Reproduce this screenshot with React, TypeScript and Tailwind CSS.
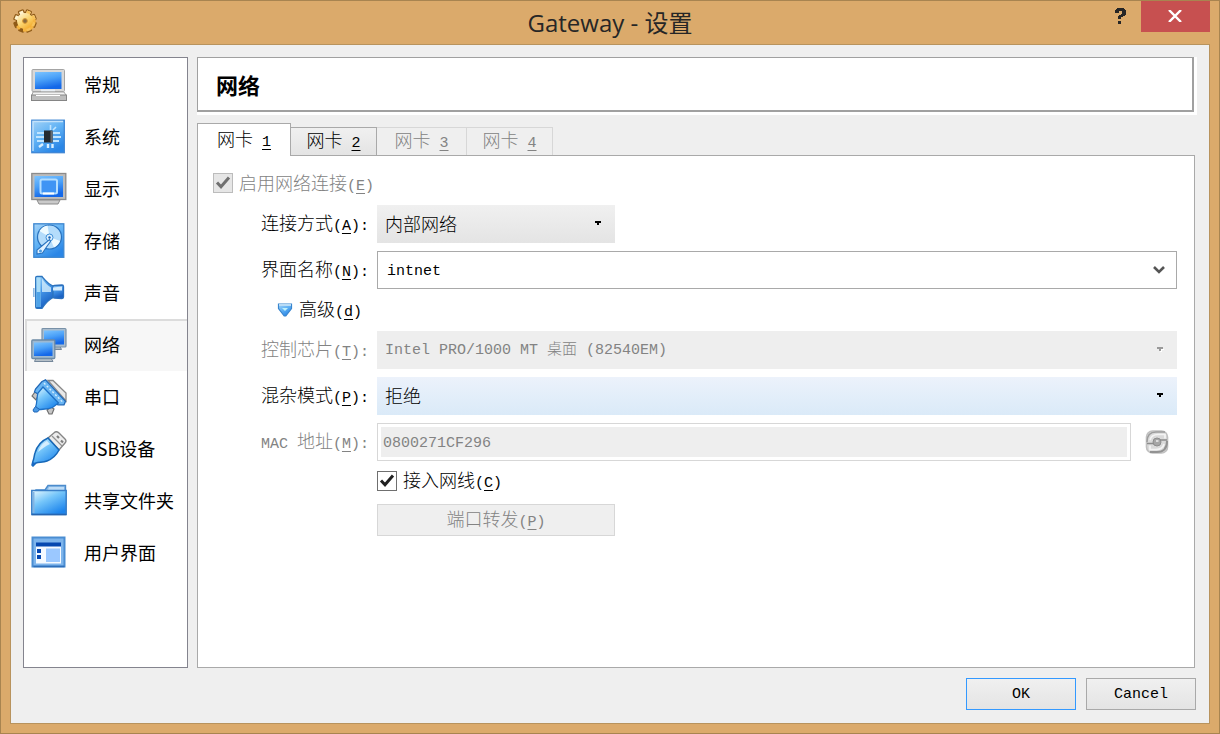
import { useState, type ReactNode, type SelectHTMLAttributes } from "react";

const song = "font-['Liberation_Mono','Noto_Sans_CJK_SC',monospace]";

function Gradients() {
  return (
    <svg width="0" height="0" className="absolute" aria-hidden="true">
      <defs>
        <linearGradient id="screen" x1="0" y1="0" x2="0.3" y2="1">
          <stop offset="0" stopColor="#7cc4ff" />
          <stop offset="0.5" stopColor="#4aa0f8" />
          <stop offset="1" stopColor="#1468e8" />
        </linearGradient>
        <linearGradient id="plate" x1="0" y1="0" x2="0.6" y2="1">
          <stop offset="0" stopColor="#a5d3f7" />
          <stop offset="0.5" stopColor="#62b3f5" />
          <stop offset="1" stopColor="#2a86e6" />
        </linearGradient>
        <linearGradient id="glass" x1="0" y1="0" x2="0.7" y2="1">
          <stop offset="0" stopColor="#eafaff" />
          <stop offset="0.45" stopColor="#76c6fa" />
          <stop offset="1" stopColor="#1c84ec" />
        </linearGradient>
        <linearGradient id="cone" x1="0" y1="0" x2="0.4" y2="1">
          <stop offset="0" stopColor="#9ed4fa" />
          <stop offset="0.5" stopColor="#4596e8" />
          <stop offset="1" stopColor="#1a62c4" />
        </linearGradient>
        <linearGradient id="gold" x1="4" y1="2" x2="19" y2="22" gradientUnits="userSpaceOnUse">
          <stop offset="0" stopColor="#fffdf2" />
          <stop offset="0.5" stopColor="#fbd672" />
          <stop offset="1" stopColor="#f09a10" />
        </linearGradient>
      </defs>
    </svg>
  );
}

function Icon({ children }: { children: ReactNode }) {
  return (
    <svg viewBox="0 0 36 36" className="size-9 shrink-0" aria-hidden="true">
      {children}
    </svg>
  );
}

const icons: Record<string, ReactNode> = {
  常规: (
    <Icon>
      <rect x="1" y="2.5" width="32.500" height="22" rx="1" fill="#d8d8d8" stroke="#a4a4a4" />
      <rect x="4" y="5" width="26.500" height="17" fill="url(#screen)" />
      <path d="M10 22.5h14v2H10z" fill="#e8eef5" />
      <path d="M2 25h31l2.200 3.500H.8z" fill="#f2f2f2" stroke="#a4a4a4" />
      <rect x=".5" y="28" width="35" height="5.500" fill="#bdbdbd" stroke="#858585" />
      <path d="M5 28.5h24" stroke="#fff" />
    </Icon>
  ),
  系统: (
    <Icon>
      <rect x=".8" y="1.2" width="32.5" height="32.5" fill="url(#plate)" stroke="#3f86d4" strokeWidth="1.3" />
      <path d="M2 32V2.5h30" fill="none" stroke="#c3e2fb" strokeWidth="1.4" />
      <path d="M6 14h7M5 18h8M6 22h7M22 14h7M22 18h8M22 22h6" stroke="#bfe4ff" strokeWidth="1.8" />
      <path d="M19.5 6v5M25 8l-3 3" stroke="#bfe4ff" strokeWidth="1.6" />
      <path d="M17 25v4M21.500 25v4M8 28l4-3" stroke="#d8efff" strokeWidth="2.4" />
      <rect x="13" y="11.5" width="8.500" height="12" fill="#252a30" />
      <path d="M20.500 12v11.500" stroke="#666c73" strokeWidth="2" />
    </Icon>
  ),
  显示: (
    <Icon>
      <rect x=".8" y="2.5" width="34" height="26" fill="#bcbcbc" stroke="#8b8b8b" strokeWidth="1.3" />
      <rect x="3.5" y="5" width="28.5" height="21" fill="url(#screen)" />
      <rect x="9.500" y="8.5" width="16.5" height="14" rx="1.5" fill="#3f94f4" stroke="#b4deff" strokeWidth="2" />
      <path d="M12 22.500h11" stroke="#fff" strokeWidth="2" />
      <path d="M6 29h23l-2 4H8z" fill="#cacaca" stroke="#8b8b8b" />
    </Icon>
  ),
  存储: (
    <Icon>
      <rect x="2.8" y=".8" width="30" height="33.5" fill="url(#plate)" stroke="#3c86cf" strokeWidth="1.3" />
      <circle cx="18.5" cy="14" r="12" fill="#b4dcfb" stroke="#2972be" strokeWidth="1.2" />
      <path d="M18.500 14L8.500 8a12 12 0 0 1 8-5.500zM18.500 14l10.500 4a12 12 0 0 1-6 6.500z" fill="#eefaff" />
      <circle cx="18.500" cy="14.500" r="3.500" fill="#dff1ff" stroke="#3f8fd8" />
      <circle cx="18.500" cy="14.500" r="1.200" fill="#1662b4" />
      <path d="M6 31v-4l6-5 6.500-5.500 1 2-4 5.500-4 6z" fill="#e3f2ff" stroke="#2972be" strokeWidth="1.100" />
      <circle cx="9.500" cy="28" r="1.500" fill="#4d9be0" />
    </Icon>
  ),
  声音: (
    <Icon>
      <path d="M20 11.500l3.500-1L31 10q1.500 0 1.500 1.500V22q0 1.500-1.500 1.500l-7.500-.5-3.500-1z" fill="url(#cone)" stroke="#2b6fbd" strokeWidth="1.300" />
      <path d="M4.700 2.500q0-1 1.300-1h5C14 5 17 9 22 11v11.500C17 25 14 29 11 33.300H6q-1.300 0-1.300-1.300z" fill="url(#cone)" stroke="#2b74be" strokeWidth="1.300" />
      <path d="M5.500 2.500h4v29.500H5.500z" fill="#a9dcf8" />
      <path d="M5.500 17h4v15h-4z" fill="#4fa3e8" />
      <path d="M11 3.500c2.500 4 5.500 7 9 9V17h-9z" fill="#d3edfd" opacity=".8" />
      <path d="M22 12.500l9-1v4h-9z" fill="#d3ebfd" />
      <path d="M2.800 13v9" stroke="#8fbbe4" strokeWidth="1.600" />
    </Icon>
  ),
  网络: (
    <Icon>
      <path d="M17 19.500h12l1.500 3H15z" fill="#a8b4be" stroke="#74879a" />
      <rect x="11" y="1.500" width="24" height="18.500" rx="1" fill="#a9bccd" stroke="#7891a8" strokeWidth="1.200" />
      <rect x="13" y="3.500" width="20" height="14" fill="url(#screen)" />
      <path d="M5 31h15l2 3.500H3.500z" fill="#b6c0c8" stroke="#74879a" />
      <rect x=".8" y="13" width="23" height="18.500" rx="1" fill="#9db8d0" stroke="#6e8ba5" strokeWidth="1.300" />
      <rect x="3" y="15.500" width="18.500" height="13.500" fill="url(#screen)" />
    </Icon>
  ),
  串口: (
    <Icon>
      <path d="M17 1.500h5L35 14v8z" fill="#e8e8e8" stroke="#8a8a8a" strokeWidth="1.300" />
      <path d="M1 17l3-4 4 2-3 6zM16 31l4-3 3 2-2 5h-3z" fill="#c6c6c6" stroke="#6f6f6f" strokeWidth="1.200" />
      <path d="M11 2.500l3.500-1.700 20 21.500-1.500 3.500h-6L3.500 13l1-3z" fill="#69b5f3" stroke="#2169b8" strokeWidth="1.300" />
      <path d="M13 4l19.500 20" stroke="#d5edfd" strokeWidth="1.400" strokeDasharray="2 2" />
      <path d="M12 8L7 14c-1.500 4-.5 9-2.500 14.500l3.500 2c5-.500 9 0 13.500-2l6-4.500z" fill="url(#glass)" stroke="#1d70c6" strokeWidth="1.300" />
      <path d="M4.500 27.500l4 3-2 2.500H3L2 31z" fill="#4a9ae6" stroke="#1e66b8" />
    </Icon>
  ),
  USB设备: (
    <Icon>
      <path d="M17 7l7-6q2-1 4 1l6 6q2 2 0 4l-6 7z" fill="#ededed" stroke="#858585" strokeWidth="1.400" />
      <path d="M21 5l10 10" stroke="#939393" strokeWidth="1.200" />
      <path d="M26 5l2 2M30 9.500l2 2" stroke="#7d7d7d" strokeWidth="2.200" />
      <path d="M17 7l11 12c-3 6-7 9-12 11-4 1.500-8 1-11 2l-3 3-1-1 1-4c1-2 1-5 2-8C6 15 10 10 17 7z" fill="url(#glass)" stroke="#1768b8" strokeWidth="1.500" />
      <path d="M7 21c2-6 5-9 9-11l3 3c-5 2-8 5-12 8z" fill="#fff" opacity=".65" />
      <path d="M1 31l4 1-3 3H1z" fill="#1869c4" />
    </Icon>
  ),
  共享文件夹: (
    <Icon>
      <path d="M14 7l3-4.500h17.500v27H5V7z" fill="#8cbce9" stroke="#4b8bcc" strokeWidth="1.400" />
      <path d="M18 4h15v3H17z" fill="#bddcf7" />
      <path d="M.8 7.500h34.400v24H.8z" fill="url(#glass)" stroke="#3a7fc8" strokeWidth="1.500" />
      <path d="M2.500 30V9" stroke="#83b4e3" strokeWidth="2" />
      <path d="M.8 31.500h34.400" stroke="#2765b0" strokeWidth="1.500" />
    </Icon>
  ),
  用户界面: (
    <Icon>
      <rect x="1.500" y="2.500" width="32" height="29" fill="#7eb5ec" stroke="#4a8dd2" strokeWidth="2" />
      <rect x="5" y="8" width="25" height="20.500" fill="#f5faff" />
      <rect x="5" y="7.500" width="25" height="4" fill="#0648b0" />
      <rect x="6" y="14" width="4" height="4" fill="#0648b0" />
      <rect x="6" y="20" width="4" height="4" fill="#0648b0" />
      <rect x="15" y="13.500" width="14" height="13.500" fill="#9bc8ff" />
      <path d="M2.500 31.500h31" stroke="#2e6fbb" strokeWidth="1.500" />
    </Icon>
  ),
};

function Gear() {
  return (
    <svg viewBox="0 0 24 24" className="size-6" aria-hidden="true">
      <g fill="#8f5a17">
        {[22, 67, 112, 157].map((a) => (
          <rect key={a} x="8.800" y=".2" width="6.400" height="23.600" rx="1.500" transform={`rotate(${a} 12 12)`} />
        ))}
        <circle cx="12" cy="12" r="8.800" />
      </g>
      {[22, 67, 112, 157].map((a) => (
        <path
          key={a}
          d="M10 1.400h4v4h-4z"
          fill="#fff3cc"
          transform={`rotate(${a - 90} 12 12)`}
        />
      ))}
      {[112, 157, 202, 247].map((a) => (
        <path key={a} d="M10 1.400h4v4h-4z" fill="#f5b440" transform={`rotate(${a - 22} 12 12)`} />
      ))}
      {[22, 67, 112, 157].map((a) => (
        <path key={a} d="M10 1.400h4v4h-4z" fill="#f8c25a" transform={`rotate(${a} 12 12)`} />
      ))}
      <circle cx="12" cy="12" r="8" fill="url(#gold)" />
      <circle cx="12" cy="12" r="2.400" fill="#8a6a3c" stroke="#d99a35" />
    </svg>
  );
}

function Key({ children }: { children: ReactNode }) {
  return <u className="underline decoration-1 underline-offset-[3px]">{children}</u>;
}

function Caption({ text, hotkey, colon }: { text: ReactNode; hotkey: string; colon?: boolean }) {
  return (
    <>
      <span className="text-lg leading-6">{text}</span>
      <span>
        (<Key>{hotkey}</Key>){colon ? ":" : ""}
      </span>
    </>
  );
}

function FieldLabel({ htmlFor, text, hotkey, dim }: { htmlFor: string; text: ReactNode; hotkey: string; dim?: boolean }) {
  return (
    <label htmlFor={htmlFor} className={`justify-self-end pt-[3px] whitespace-nowrap ${dim ? "text-[#838383]" : "text-black"}`}>
      <Caption text={text} hotkey={hotkey} colon />
    </label>
  );
}

function Drop({ tone, className, children, ...rest }: { tone: string } & SelectHTMLAttributes<HTMLSelectElement>) {
  return (
    <div className={`grid items-center ${className ?? ""}`}>
      <select
        {...rest}
        className={`col-start-1 row-start-1 h-[38px] w-full appearance-none pt-[3px] pr-8 pl-2 outline-none disabled:opacity-100 ${tone}`}
      >
        {children}
      </select>
      <svg
        viewBox="0 0 8 6"
        className={`pointer-events-none col-start-1 row-start-1 mr-[13px] h-[6px] w-2 justify-self-end ${rest.disabled ? "text-[#9a9a9a]" : "text-black"}`}
        shapeRendering="crispEdges"
        aria-hidden="true"
      >
        {rest.disabled && <path d="M4 2h4v1H6v2H4z" fill="#fff" />}
        <path d="M1 0h6v2H5v2H3V2H1z" fill="currentColor" />
      </svg>
    </div>
  );
}

function Tick({ id, checked, disabled, onChange }: { id: string; checked: boolean; disabled?: boolean; onChange?: (v: boolean) => void }) {
  return (
    <span className="grid size-5 shrink-0">
      <input
        id={id}
        type="checkbox"
        checked={checked}
        disabled={disabled}
        onChange={(e) => onChange?.(e.target.checked)}
        className="col-start-1 row-start-1 size-5 appearance-none border border-[#6f6f6f] bg-white disabled:border-[#bcbcbc] disabled:bg-[#e6e6e6]"
      />
      {checked && (
        <svg viewBox="0 0 20 20" className={`pointer-events-none col-start-1 row-start-1 size-5 ${disabled ? "text-[#707070]" : "text-[#212121]"}`} aria-hidden="true">
          <path d="M4 9.500l4 4.200L16 4.500" fill="none" stroke="currentColor" strokeWidth="3" />
        </svg>
      )}
    </span>
  );
}

function RefreshIcon() {
  return (
    <svg viewBox="0 0 24 24" className="size-6" fill="none" aria-hidden="true">
      <rect x="1.500" y="1" width="21" height="22" rx="6" fill="#dadada" stroke="#c0c0c0" strokeWidth="1.600" />
      <path d="M2 12C2 5 5 2 11 2h9" stroke="#9d9d9d" strokeWidth="1.500" />
      <path d="M22 11c0 8-4 11-10 11H5" stroke="#929292" strokeWidth="2" />
      <path d="M5 10c1-4 4-5.500 8-5.500h7v4M19 14c-1 4-4 5.500-8 5.500H5v-4" stroke="#f4f4f4" strokeWidth="1.700" />
      <path d="M2 13.500h8M13 10h9" stroke="#8c8c8c" strokeWidth="1.500" />
      <circle cx="12" cy="12" r="4" fill="#a6a6a6" stroke="#8d8d8d" />
      <path d="M11 11h2.500" stroke="#eee" strokeWidth="1.500" />
    </svg>
  );
}

function Sidebar({ current, onPick }: { current: string; onPick: (name: string) => void }) {
  return (
    <nav className="w-[165px] shrink-0 border border-[#84848e] bg-white pt-px pl-px font-['Noto_Sans_CJK_SC',sans-serif] text-lg font-normal text-black">
      {Object.keys(icons).map((name) => (
        <button
          key={name}
          type="button"
          onClick={() => onPick(name)}
          className={`flex h-[52px] w-full items-center gap-[17px] pr-1 text-left whitespace-nowrap ${
            name === current ? "border-t-2 border-l-2 border-[#dcdcdc] bg-[#f7f7f7] pb-[2px] pl-1" : "pl-[6px]"
          }`}
        >
          {icons[name]}
          <span className="pb-[3px]">{name}</span>
        </button>
      ))}
    </nav>
  );
}

function Tabs() {
  const base = "flex items-center justify-center pt-[3px] text-center whitespace-pre";
  const label = (n: number) => (
    <span>
      <span className="text-lg leading-6">网卡</span> <Key>{n}</Key>
    </span>
  );
  return (
    <div role="tablist" className="flex items-end">
      <button role="tab" aria-selected="true" type="button" className={`${base} relative -mb-px h-[33px] w-[94px] border border-b-0 border-[#a9a9a9] bg-white`}>
        {label(1)}
      </button>
      <button role="tab" aria-selected="false" type="button" className={`${base} h-7 w-[86px] border border-b-0 border-l-0 border-[#a9a9a9] bg-linear-to-b from-[#f0f0f0] to-[#e4e4e4]`}>
        {label(2)}
      </button>
      <button role="tab" aria-selected="false" type="button" disabled className={`${base} h-7 w-[90px] border border-b-0 border-l-0 border-[#d7d7d7] text-[#838383]`}>
        {label(3)}
      </button>
      <button role="tab" aria-selected="false" type="button" disabled className={`${base} h-7 w-[86px] border border-b-0 border-l-0 border-[#d7d7d7] text-[#838383]`}>
        {label(4)}
      </button>
    </div>
  );
}

function AdapterForm() {
  const [cable, setCable] = useState(true);
  const [name, setName] = useState("intnet");
  return (
    <form className="mr-[2px] flex-1 border border-[#a9a9a9] bg-white pt-[17px] pr-[17px] pb-4 pl-[15px]">
      <div className="mb-3 flex items-center gap-[6px] text-[#838383]">
        <Tick id="enable" checked disabled />
        <label htmlFor="enable" className="h-5 leading-5">
          <Caption text="启用网络连接" hotkey="E" />
        </label>
      </div>
      <div className="grid grid-cols-[156px_minmax(0,1fr)] items-center gap-x-2 gap-y-2">
        <FieldLabel htmlFor="attach" text="连接方式" hotkey="A" />
        <Drop id="attach" className="w-[238px]" tone="bg-linear-to-b from-[#f0f0f0] to-[#e4e4e4] text-lg">
          <option>内部网络</option>
        </Drop>

        <FieldLabel htmlFor="iface" text="界面名称" hotkey="N" />
        <div className="flex h-[38px] items-center border border-[#a9a9a9] bg-white">
          <input id="iface" value={name} onChange={(e) => setName(e.target.value)} className="h-full min-w-0 flex-1 px-[9px] pt-[3px] outline-none" />
          <button type="button" aria-label="展开列表" className="flex h-full w-[34px] items-center justify-center">
            <svg viewBox="0 0 12 10" className="h-[10px] w-3" aria-hidden="true">
              <path d="M1 2l5 5 5-5" fill="none" stroke="#555" strokeWidth="2.600" />
            </svg>
          </button>
        </div>

        <button type="button" className="col-span-2 ml-16 flex h-[26px] items-center gap-[6px] justify-self-start">
          <svg viewBox="0 0 16 14" className="h-[14px] w-4" aria-hidden="true">
            <path d="M1.500 1h13v4.500L8.800 13H7.200L1.500 5.500z" fill="url(#plate)" stroke="#3985ce" strokeWidth="1.200" />
            <path d="M2 2h12" stroke="#b9dcf6" strokeWidth="2" />
            <path d="M5 5h6L8 8z" fill="#bdf0fb" />
          </svg>
          <span className="pt-[3px]">
            <Caption text="高级" hotkey="d" />
          </span>
        </button>

        <FieldLabel htmlFor="chip" text="控制芯片" hotkey="T" dim />
        <Drop id="chip" disabled tone="bg-[#eeeeee] text-[#838383]">
          <option>Intel PRO/1000 MT 桌面 (82540EM)</option>
        </Drop>

        <FieldLabel htmlFor="promisc" text="混杂模式" hotkey="P" />
        <Drop id="promisc" tone="bg-linear-to-b from-[#ecf2fb] to-[#daeaf8] text-lg">
          <option>拒绝</option>
        </Drop>

        <FieldLabel
          htmlFor="mac"
          text={
            <>
              <span className="text-[15px]">MAC </span>地址
            </>
          }
          hotkey="M"
          dim
        />
        <div className="flex items-center gap-[14px] pr-2">
          <div className="h-[38px] flex-1 border border-[#d7d7d7] bg-white p-[3px]">
            <input id="mac" disabled defaultValue="0800271CF296" className="h-full w-full bg-[#eeeeee] px-[2px] pt-[3px] text-[#838383]" />
          </div>
          <button type="button" disabled aria-label="刷新">
            <RefreshIcon />
          </button>
        </div>

        <div className="col-start-2 flex h-6 items-center gap-[6px]">
          <Tick id="cable" checked={cable} onChange={setCable} />
          <label htmlFor="cable" className="pt-[3px]">
            <Caption text="接入网线" hotkey="C" />
          </label>
        </div>

        <button type="button" disabled className="col-start-2 mt-[3px] flex h-8 w-[238px] items-center justify-center border border-[#d7d7d7] bg-[#efefef] pt-[3px] text-[#838383]">
          <span>
            <Caption text="端口转发" hotkey="P" />
          </span>
        </button>
      </div>
    </form>
  );
}

export default function App() {
  const [page, setPage] = useState("网络");
  return (
    <div className="flex min-h-screen flex-col border border-[#a88450] bg-[#dbaa6b]">
      <Gradients />
      <header className="grid h-[43px] grid-cols-[1fr_auto_1fr]">
        <div className="pt-2 pl-3">
          <Gear />
        </div>
        <h1 className="self-center font-['Open_Sans','Noto_Sans_CJK_SC',sans-serif] text-2xl leading-8 text-[#262626]">
          Gateway - 设置
        </h1>
        <div className="mr-[9px] flex items-start justify-end">
          <button type="button" aria-label="帮助" className="flex h-[31px] w-[42px] items-center justify-center pb-[2px]">
            <svg viewBox="0 0 11 16" className="h-4 w-[11px]" shapeRendering="crispEdges" aria-hidden="true">
              <path d="M2 0h7v1h1v1h1v5h-1v1H8v1H6v2H3V8h1V7h2V6h1V3H4v2H0V2h1V1h1zM3 13h3v3H3z" fill="#262626" />
            </svg>
          </button>
          <button type="button" aria-label="关闭" className="flex h-[31px] w-[69px] items-center justify-center bg-[#c75050] pr-px pb-px">
            <svg viewBox="0 0 14 12" className="h-3 w-[14px]" aria-hidden="true">
              <path d="M1 0l12 12M13 0L1 12" stroke="#fff" strokeWidth="2.400" />
            </svg>
          </button>
        </div>
      </header>
      <div className={`mx-[9px] mb-[9px] flex flex-1 flex-col gap-[10px] border border-[#b8935d] bg-[#efefef] p-3 pb-[13px] text-[15px] font-light text-black ${song}`}>
        <div className="flex flex-1 gap-[9px]">
          <Sidebar current={page} onPick={setPage} />
          <main className="flex min-w-0 flex-1 flex-col">
            <div className="mb-2 bg-white pr-[3px] pb-[3px]">
              <h2 className="flex h-[55px] items-center border border-r-2 border-b-2 border-[#a0a0a0] pt-2 pl-[18px] text-[22px] font-bold">
                {page}
              </h2>
            </div>
            <Tabs />
            <AdapterForm />
          </main>
        </div>
        <div className="mr-px flex justify-end gap-[10px]">
          <button type="button" className="h-8 w-[110px] border border-[#3399ff] bg-linear-to-b from-[#f0f0f0] to-[#e4e4e4] pt-[3px]">
            OK
          </button>
          <button type="button" className="h-8 w-[110px] border border-[#a9a9a9] bg-linear-to-b from-[#f0f0f0] to-[#e4e4e4] pt-[3px]">
            Cancel
          </button>
        </div>
      </div>
    </div>
  );
}
